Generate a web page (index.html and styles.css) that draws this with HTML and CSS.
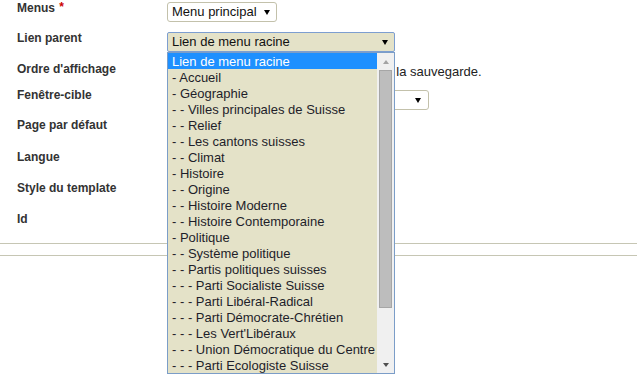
FILE: index.html
```html
<!doctype html>
<html lang="fr">
	<head>
		<meta charset="utf-8">
		<title>Détails de l'élément de menu</title>
		<link rel="stylesheet" href="styles.css">
	</head>
	<body>
		<div class="form">
			<div class="row row-30">
				<div class="label">Menus <span class="star">*</span></div>
				<div class="value">
					<div class="select select-menus"><span>Menu principal</span><i class="arrow"></i></div>
				</div>
			</div>
			<div class="row row-31">
				<div class="label">Lien parent</div>
				<div class="value">
					<div class="select select-parent">
						<span>Lien de menu racine</span><i class="arrow"></i>
						<div class="list">
							<ul class="options">
								<li class="selected">Lien de menu racine</li>
								<li>- Accueil</li>
								<li>- Géographie</li>
								<li>- - Villes principales de Suisse</li>
								<li>- - Relief</li>
								<li>- - Les cantons suisses</li>
								<li>- - Climat</li>
								<li>- Histoire</li>
								<li>- - Origine</li>
								<li>- - Histoire Moderne</li>
								<li>- - Histoire Contemporaine</li>
								<li>- Politique</li>
								<li>- - Système politique</li>
								<li>- - Partis politiques suisses</li>
								<li>- - - Parti Socialiste Suisse</li>
								<li>- - - Parti Libéral-Radical</li>
								<li>- - - Parti Démocrate-Chrétien</li>
								<li>- - - Les Vert'Libéraux</li>
								<li>- - - Union Démocratique du Centre</li>
								<li>- - - Parti Ecologiste Suisse</li>
							</ul>
							<div class="scrollbar">
								<div class="scroll-btn"><i class="tri-up"></i></div>
								<div class="scroll-track"><div class="thumb"></div></div>
								<div class="scroll-btn"><i class="tri-down"></i></div>
							</div>
						</div>
					</div>
				</div>
			</div>
			<div class="row row-26">
				<div class="label">Ordre d'affichage</div>
				<div class="value">
					<span class="note">L'ordre peut être modifié après la sauvegarde.</span>
				</div>
			</div>
			<div class="row row-30">
				<div class="label">Fenêtre-cible</div>
				<div class="value">
					<div class="select select-target"><span></span><i class="arrow"></i></div>
				</div>
			</div>
			<div class="row row-32">
				<div class="label">Page par défaut</div>
			</div>
			<div class="row row-31">
				<div class="label">Langue</div>
			</div>
			<div class="row row-31">
				<div class="label">Style du template</div>
			</div>
			<div class="row row-31">
				<div class="label">Id</div>
			</div>
		</div>
		<div class="below"></div>
	</body>
</html>
```

FILE: styles.css
```css
* {
	box-sizing: border-box;
}

body {
	margin: 0;
	min-height: 379px;
	background: #fff;
	font-family: "Liberation Sans", Arial, sans-serif;
	font-size: 13px;
	color: #222;
}

.form {
	padding-top: 1px;
	border-bottom: 1px solid #c6c6b4;
}

.row {
	display: flex;
	align-items: flex-start;
}

.row-26 { height: 26px; }
.row-30 { height: 30px; }
.row-31 { height: 31px; }
.row-32 { height: 32px; }

.label {
	width: 167px;
	padding-left: 17px;
	font-size: 12px;
	font-weight: bold;
	line-height: 15px;
	color: #333;
}

.star {
	color: #c00;
	margin-left: 1px;
	position: relative;
	top: -1px;
}

.value {
	flex: 1;
}

/* faux selects */
.select {
	position: relative;
	display: flex;
	align-items: center;
	justify-content: space-between;
	height: 20px;
	margin-top: 1px;
	padding: 0 6px 0 4px;
	border: 1px solid #c3c1ab;
	border-radius: 3px;
	background: #fff;
	color: #111;
	line-height: 18px;
}

.arrow {
	width: 0;
	height: 0;
	border-left: 3px solid transparent;
	border-right: 3px solid transparent;
	border-top: 5px solid #000;
}

.select-menus {
	width: 110px;
}

.select-parent {
	width: 228px;
	border-color: #7d9ed0;
	border-radius: 2px;
	background: #e4e2c8;
	z-index: 2;
}

.select-target {
	width: 262px;
	margin-top: 2px;
	padding-right: 7px;
}

/* liste ouverte */
.list {
	position: absolute;
	top: 19px;
	left: -1px;
	width: 228px;
	display: flex;
	border: 1px solid #7b9dc8;
	background: #e4e2c8;
}

.options {
	flex: 1;
	margin: 0;
	padding: 0;
	list-style: none;
}

.options li {
	height: 16px;
	padding: 1px 0 0 4px;
	line-height: 16px;
	white-space: nowrap;
	color: #1e1e2a;
}

.options li.selected {
	background: #1e90ff;
	color: #fff;
}

.scrollbar {
	width: 17px;
	display: flex;
	flex-direction: column;
	background: #f0f0f0;
}

.scroll-btn {
	height: 17px;
	display: flex;
	align-items: center;
	justify-content: center;
}

.scroll-track {
	flex: 1;
	padding: 0 2px;
}

.thumb {
	height: 238px;
	background: #bdbdbd;
	border: 1px solid #a6a6a6;
}

.tri-up {
	border-left: 3px solid transparent;
	border-right: 3px solid transparent;
	border-bottom: 4px solid #a3a3a3;
}

.tri-down {
	border-left: 3px solid transparent;
	border-right: 3px solid transparent;
	border-top: 4px solid #505050;
}

.note {
	display: block;
	padding: 2px 0 0 49px;
	white-space: nowrap;
	line-height: 16px;
}

.below {
	margin-top: 11px;
	border-top: 1px solid #c6c6b4;
}
```
